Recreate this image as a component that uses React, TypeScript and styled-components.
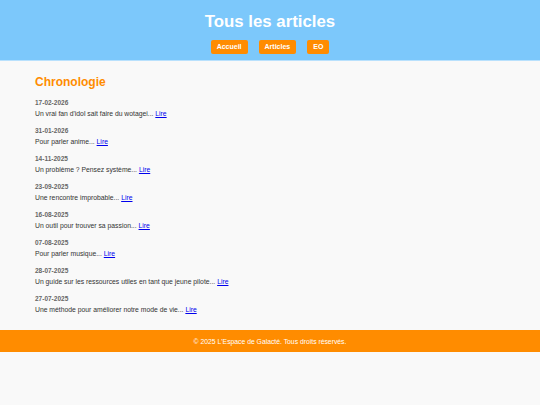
import styled, { createGlobalStyle } from "styled-components";

const GlobalStyle = createGlobalStyle`
  html, body {
    margin: 0;
    padding: 0;
    background: #f9f9f9;
    font-family: "Liberation Sans", Arial, sans-serif;
  }
`;

const Page = styled.div`
  width: 100%;
  min-height: 405px;
  display: flex;
  flex-direction: column;
`;

const Header = styled.header`
  background: #7cc8fb;
  height: 61px;
  display: flex;
  flex-direction: column;
  align-items: center;
  box-sizing: border-box;
  padding-top: 11px;
  border-bottom: 1px solid #b9e1fd;
`;

const Title = styled.h1`
  margin: 0;
  color: #fff;
  font-size: 16.8px;
  font-weight: bold;
  line-height: 22px;
`;

const Nav = styled.nav`
  display: flex;
  gap: 11px;
  margin-top: 7px;
`;

const NavButton = styled.a`
  background: #ff8c00;
  color: #fff;
  font-size: 7px;
  font-weight: bold;
  padding: 0 6px;
  height: 14px;
  line-height: 14px;
  border-radius: 2px;
  text-decoration: none;
`;

const Main = styled.main`
  padding: 14px 35px 0;
  height: 255px;
`;

const Section = styled.h2`
  margin: 0 0 9px;
  color: #ff8c00;
  font-size: 12px;
  font-weight: bold;
  line-height: 14px;
`;

const Entry = styled.div`
  margin-bottom: 7px;
  font-size: 6.8px;
  line-height: 10px;
`;

const DateLine = styled.div`
  color: #666;
  font-weight: bold;
  font-size: 6.5px;
  margin-bottom: 1px;
`;

const Summary = styled.div`
  color: #333;
`;

const ReadLink = styled.a`
  color: #0000ee;
  text-decoration: underline;
`;

const Footer = styled.footer`
  background: #ff8c00;
  height: 22px;
  color: #fff;
  font-size: 6.8px;
  display: flex;
  align-items: center;
  justify-content: center;
`;

const articles = [
  { date: "17-02-2026", text: "Un vrai fan d'idol sait faire du wotagei..." },
  { date: "31-01-2026", text: "Pour parler anime..." },
  { date: "14-11-2025", text: "Un problème ? Pensez système..." },
  { date: "23-09-2025", text: "Une rencontre improbable..." },
  { date: "16-08-2025", text: "Un outil pour trouver sa passion..." },
  { date: "07-08-2025", text: "Pour parler musique..." },
  { date: "28-07-2025", text: "Un guide sur les ressources utiles en tant que jeune pilote..." },
  { date: "27-07-2025", text: "Une méthode pour améliorer notre mode de vie..." },
];

export default function App() {
  return (
    <Page>
      <GlobalStyle />
      <Header>
        <Title>Tous les articles</Title>
        <Nav>
          <NavButton href="#">Accueil</NavButton>
          <NavButton href="#">Articles</NavButton>
          <NavButton href="#">EO</NavButton>
        </Nav>
      </Header>
      <Main>
        <Section>Chronologie</Section>
        {articles.map((a) => (
          <Entry key={a.date}>
            <DateLine>{a.date}</DateLine>
            <Summary>
              {a.text} <ReadLink href="#">Lire</ReadLink>
            </Summary>
          </Entry>
        ))}
      </Main>
      <Footer>© 2025 L'Espace de Galacté. Tous droits réservés.</Footer>
    </Page>
  );
}
